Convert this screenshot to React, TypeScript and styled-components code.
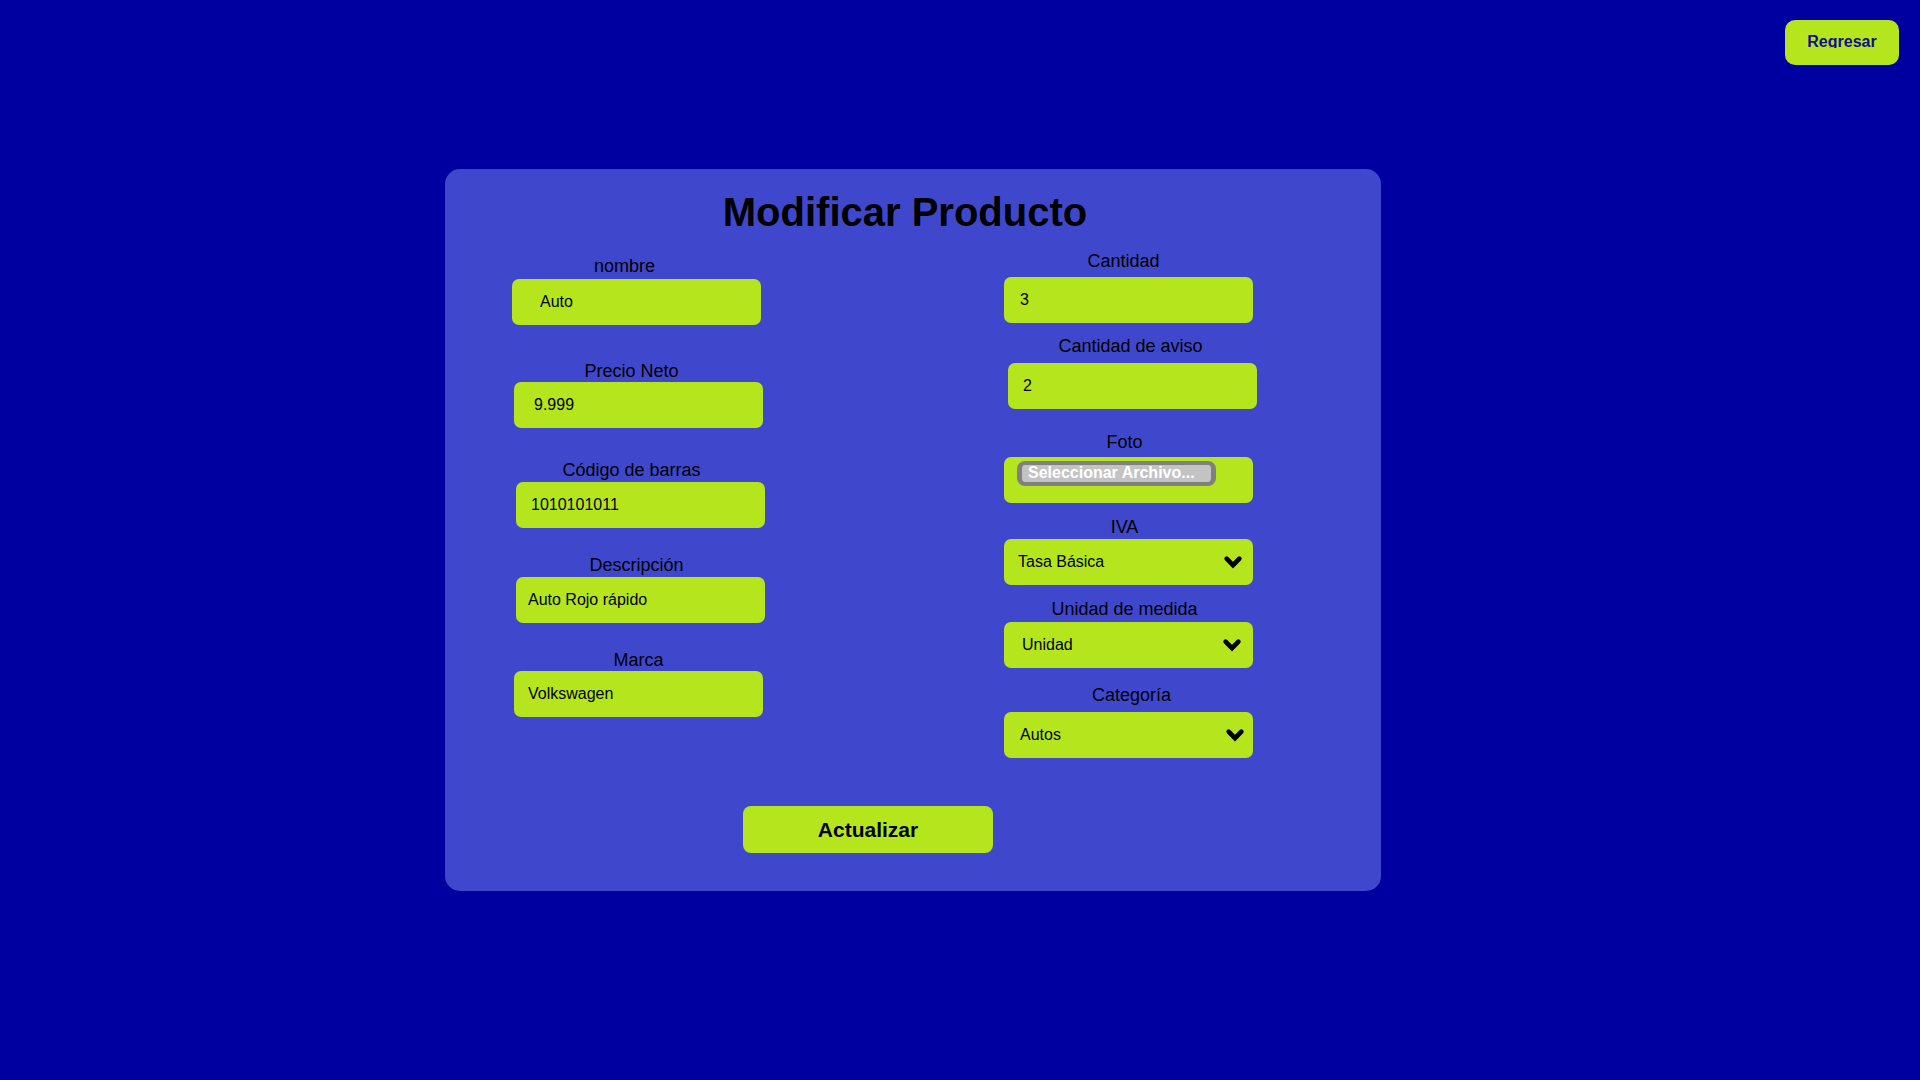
import React from "react";
import styled, { createGlobalStyle } from "styled-components";

const Global = createGlobalStyle`
  html, body { margin: 0; padding: 0; }
  body {
    background: #0000a0;
    font-family: "Liberation Sans", Arial, sans-serif;
    min-height: 1080px;
  }
  * { box-sizing: border-box; }
`;

const Page = styled.div`
  display: flex;
  flex-direction: column;
  width: 1920px;
  min-height: 1080px;
`;

const TopBar = styled.div`
  display: flex;
  justify-content: flex-end;
  padding: 20px 21px 0 0;
`;

const BackButton = styled.button`
  display: flex;
  justify-content: center;
  align-items: flex-start;
  width: 114px;
  height: 45px;
  padding: 14px 0 0;
  border: none;
  border-radius: 10px;
  background: #b5e61d;
  color: #10108f;
  font-family: "Liberation Sans", Arial, sans-serif;
  font-weight: 700;
  font-size: 16px;
  cursor: pointer;
`;

const BackText = styled.span`
  display: block;
  height: 14px;
  line-height: 16px;
  overflow: hidden;
`;

const Card = styled.form`
  display: flex;
  flex-direction: column;
  align-items: flex-start;
  width: 936px;
  height: 722px;
  margin: 104px 0 0 445px;
  background: #3f48cc;
  border-radius: 15px;
`;

const Title = styled.h1`
  align-self: stretch;
  margin: 20px 0 0;
  padding-right: 16px;
  text-align: center;
  font-size: 40px;
  line-height: 46px;
  font-weight: 700;
  color: #000;
`;

const Columns = styled.div`
  display: flex;
  align-items: flex-start;
  padding-left: 67px;
  margin-top: 16px;
`;

const Column = styled.div<{ $top: number; $left: number }>`
  display: flex;
  flex-direction: column;
  width: 253px;
  padding-top: ${(p) => p.$top}px;
  margin-left: ${(p) => p.$left}px;
`;

const Field = styled.div<{ $x: number; $top: number }>`
  display: flex;
  flex-direction: column;
  align-items: flex-start;
  margin-left: ${(p) => p.$x}px;
  margin-top: ${(p) => p.$top}px;
`;

const Label = styled.label<{ $dx: number; $gap: number }>`
  display: block;
  width: 249px;
  margin-left: ${(p) => p.$dx}px;
  margin-bottom: ${(p) => p.$gap}px;
  text-align: center;
  font-size: 18px;
  line-height: 21px;
  color: #000;
`;

const TextInput = styled.input<{ $pad: number }>`
  width: 249px;
  height: 46px;
  padding: 0 8px 0 ${(p) => p.$pad}px;
  border: none;
  border-radius: 7px;
  background: #b5e61d;
  color: #000;
  font-family: "Liberation Sans", Arial, sans-serif;
  font-size: 16px;
  outline: none;
`;

const FileBox = styled.div`
  width: 249px;
  height: 46px;
  padding: 4px 0 0 13px;
  border-radius: 7px;
  background: #b5e61d;
`;

const FileButton = styled.span`
  display: block;
  width: 199px;
  height: 25px;
  padding-left: 6px;
  border: solid #808080;
  border-width: 4px 5px;
  border-radius: 8px;
  background: #c3c3c3;
  color: #fff;
  font-weight: 700;
  font-size: 16px;
  line-height: 16px;
  white-space: nowrap;
  overflow: hidden;
`;

const SelectBox = styled.div<{ $pad: number; $right: number }>`
  display: flex;
  align-items: center;
  justify-content: space-between;
  width: 249px;
  height: 46px;
  padding: 0 ${(p) => p.$right}px 0 ${(p) => p.$pad}px;
  border-radius: 7px;
  background: #b5e61d;
  color: #000;
  font-size: 16px;
  cursor: pointer;
`;

const ChevronSvg = styled.svg`
  display: block;
  width: 18px;
  height: 13px;
  overflow: visible;
`;

const Chevron = () => (
  <ChevronSvg viewBox="0 0 18 13" aria-hidden="true">
    <polyline
      points="2.6,2.6 9,9.2 15.4,2.6"
      fill="none"
      stroke="#000"
      strokeWidth="4.6"
      strokeLinecap="round"
      strokeLinejoin="miter"
    />
  </ChevronSvg>
);

const SubmitButton = styled.button`
  width: 250px;
  height: 47px;
  margin: 48px 0 0 298px;
  border: none;
  border-radius: 8px;
  background: #b5e61d;
  color: #000;
  font-family: "Liberation Sans", Arial, sans-serif;
  font-weight: 700;
  font-size: 21px;
  cursor: pointer;
`;

type InputField = {
  label: string;
  value: string;
  x: number;
  top: number;
  dx: number;
  gap: number;
  pad: number;
};

const leftFields: InputField[] = [
  { label: "nombre", value: "Auto", x: 0, top: 0, dx: -12, gap: 2, pad: 28 },
  { label: "Precio Neto", value: "9.999", x: 2, top: 36, dx: -7, gap: 0, pad: 20 },
  { label: "Código de barras", value: "1010101011", x: 4, top: 32, dx: -9, gap: 1, pad: 15 },
  { label: "Descripción", value: "Auto Rojo rápido", x: 4, top: 27, dx: -4, gap: 1, pad: 12 },
  { label: "Marca", value: "Volkswagen", x: 2, top: 27, dx: 0, gap: 0, pad: 14 },
];

const selects = [
  { label: "IVA", value: "Tasa Básica", top: 14, dx: -4, gap: 1, pad: 14, right: 11 },
  { label: "Unidad de medida", value: "Unidad", top: 14, dx: -4, gap: 2, pad: 18, right: 12 },
  { label: "Categoría", value: "Autos", top: 17, dx: 3, gap: 6, pad: 16, right: 9 },
];

export default function App() {
  return (
    <Page>
      <Global />
      <TopBar>
        <BackButton type="button">
          <BackText>Regresar</BackText>
        </BackButton>
      </TopBar>
      <Card onSubmit={(e) => e.preventDefault()}>
        <Title>Modificar Producto</Title>
        <Columns>
          <Column $top={5} $left={0}>
            {leftFields.map((f) => (
              <Field key={f.label} $x={f.x} $top={f.top}>
                <Label $dx={f.dx} $gap={f.gap}>{f.label}</Label>
                <TextInput $pad={f.pad} defaultValue={f.value} />
              </Field>
            ))}
          </Column>
          <Column $top={0} $left={239}>
            <Field $x={0} $top={0}>
              <Label $dx={-5} $gap={5}>Cantidad</Label>
              <TextInput $pad={16} defaultValue="3" />
            </Field>
            <Field $x={4} $top={13}>
              <Label $dx={-2} $gap={6}>Cantidad de aviso</Label>
              <TextInput $pad={15} defaultValue="2" />
            </Field>
            <Field $x={0} $top={23}>
              <Label $dx={-4} $gap={4}>Foto</Label>
              <FileBox>
                <FileButton>Seleccionar Archivo...</FileButton>
              </FileBox>
            </Field>
            {selects.map((s) => (
              <Field key={s.label} $x={0} $top={s.top}>
                <Label $dx={s.dx} $gap={s.gap}>{s.label}</Label>
                <SelectBox $pad={s.pad} $right={s.right}>
                  <span>{s.value}</span>
                  <Chevron />
                </SelectBox>
              </Field>
            ))}
          </Column>
        </Columns>
        <SubmitButton type="submit">Actualizar</SubmitButton>
      </Card>
    </Page>
  );
}
